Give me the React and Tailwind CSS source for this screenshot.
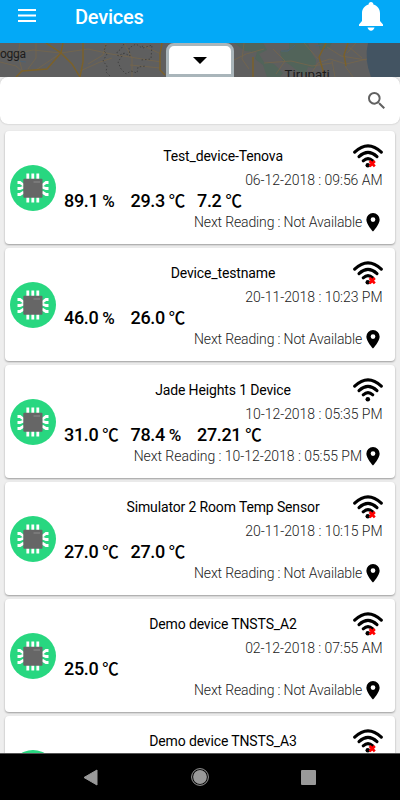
const DEVICES = [
  {
    name: 'Test_device-Tenova', date: '06-12-2018 : 09:56 AM', online: false,
    readings: [['89.1', '%'], ['29.3', '℃'], ['7.2', '℃']], next: null,
  },
  {
    name: 'Device_testname', date: '20-11-2018 : 10:23 PM', online: false,
    readings: [['46.0', '%'], ['26.0', '℃']], next: null,
  },
  {
    name: 'Jade Heights 1 Device', date: '10-12-2018 : 05:35 PM', online: true,
    readings: [['31.0', '℃'], ['78.4', '%'], ['27.21', '℃']], next: '10-12-2018 : 05:55 PM',
  },
  {
    name: 'Simulator 2 Room Temp Sensor', date: '20-11-2018 : 10:15 PM', online: false,
    readings: [['27.0', '℃'], ['27.0', '℃']], next: null,
  },
  {
    name: 'Demo device TNSTS_A2', date: '02-12-2018 : 07:55 AM', online: false,
    readings: [['25.0', '℃']], next: null,
  },
  // Only the top of this card is visible above the navigation bar
  { name: 'Demo device TNSTS_A3', online: false, readings: [] },
];

function ChipIcon() {
  return (
    <svg viewBox="0 0 46 46" className="w-[46px] h-[46px] mt-px flex-shrink-0">
      <circle cx="23" cy="23" r="23" fill="#28d780" />
      <g stroke="#fff" strokeWidth="2.8" fill="none">
        <path d="M17.8 8.500v29M22.8 8.500v29M27.8 8.500v29" />
        <path d="M7.500 17.500h2.500l4 3M7.500 23.500h2.500l4-1.500M7.500 29.500h2.500l4-2.500" />
        <path d="M38.500 17.500h-2.500l-4 3M38.500 23.500h-2.500l-4-1.500M38.500 29.500h-2.500l-4-2.500" />
      </g>
      <rect x="13.300" y="13.700" width="19.200" height="19" rx="1" fill="#666" />
      <path d="M23.500 17h6.500" stroke="#858585" strokeWidth="1.200" />
    </svg>
  );
}

function WifiIcon({ online }) {
  return (
    <svg viewBox="0 0 30 24" className="w-[30px] h-6 -mr-px flex-shrink-0">
      <g fill="none" stroke="#000" strokeWidth="3.100" strokeLinecap="round">
        <path d="M1.700 8.200Q15-4.400 28.300 8.200" />
        <path d="M6 12.600Q15 4.300 24 12.600" />
        <path d="M10.200 16.800Q15 12.500 19.800 16.800" />
      </g>
      <circle cx="14.800" cy="21.200" r="2.300" />
      {!online && <path d="M16.600 17l5.200 5.400M21.800 17l-5.200 5.400" stroke="#f00" strokeWidth="2.700" />}
    </svg>
  );
}

function PinIcon() {
  return (
    <svg viewBox="0 0 14 20" className="w-[14px] h-[19px] flex-shrink-0">
      <path fillRule="evenodd" d="M7 0a7 7 0 0 0-7 7c0 5 7 12.500 7 12.500S14 12 14 7a7 7 0 0 0-7-7zm0 4.400a2.500 2.500 0 1 1 0 5 2.500 2.500 0 0 1 0-5z" />
    </svg>
  );
}

function MapStrip() {
  return (
    <svg viewBox="0 0 400 34" className="absolute inset-0 w-full h-full">
      <rect width="400" height="34" fill="#5f5f5f" />
      {/* Forest and water */}
      <path d="M234 0h29l4 7-8 4 5 8 10 2 9 9-3 4h-13l-4-12-8-6 2-7-12-1z" fill="#52645a" />
      <path d="M289 0h19l3 9 5 8-1 8-7-1-3 8-6-3-9-7-8-5-2-9 9-2z" fill="#52645a" />
      <path d="M318 0h14l-3 5-9 2z" fill="#52645a" />
      <path d="M368 0h32v34h-29Q364 16 368 0z" fill="#435462" />
      <path d="M281 8l7 0 7-6M315 3l7-1M18 18l8 1" stroke="#4c6276" fill="none" />
      {/* Minor roads */}
      <g fill="none" stroke="#76664a" strokeWidth="0.800">
        <path d="M0 19l16 4 7 6M20 0l-2 12 4 15M36 0v15l-8 11M0 8l13 3 20-4 28 3M61 10L36 27M61 10l27-4 23 5 50 8M80 28l20-9 12-4M124 0l8 15v19M106 0l-3 12-15 9M144 3l17 8M130 22l30 3" />
        <path d="M234 17l12-6 18-5M244 0l-2 16 7 10M264 20l27-2 21 5 20-3M309 34l9-14 12-4 16 5 21-5M327 4l14 9 25 4M345 23l8 11M356 0l-9 10M335 34l-3-16M273 6l12 12-9 13M304 0l14 16M349 4l13 11" />
      </g>
      {/* Highways */}
      <g fill="none" stroke="#7c6128" strokeWidth="1.400">
        <path d="M46 0l15 10 11 11 8 13M16 34l6-6 25-2 14-16 2-10M83 0v19l-3 15M162 0l-2 11v16l5 5" />
        <path d="M253 14v20M326 0l-7 14 5 17M348 0l-4 12 2 11" />
      </g>
      <path d="M106 2l-2 6 3 3-4 7 4 5-1 6 5 5M124 1l-3 5-4 3 1 4 6-3 6 3-1-8 7-4 6 4 1-4M124 10l-6 9 3 7 5 5 5-3 6 2 1-6 8-1M143 5l9-3-1 14-10 1" fill="none" stroke="#414141" strokeDasharray="1.500 2" />
      <text x="0" y="15" fontSize="12" letterSpacing="-0.300" fill="#1c1c1c">ogga</text>
      <text x="284.500" y="36" fontSize="13.300" fill="#1c1c1c">Tirupati</text>
    </svg>
  );
}

function DeviceCard({ device }) {
  return (
    <div className="flex items-center flex-shrink-0 h-[112.5px] mb-[4.5px] pl-[5px] pr-[13px] gap-2 bg-white rounded shadow-[0_1px_2px_rgba(0,0,0,0.35)]">
      <ChipIcon />
      <div className="flex-1 min-w-0 self-start pt-[13px]">
        {/* Name + connection */}
        <div className="flex items-center h-6">
          <span className="w-[29px]" />
          <p className="flex-1 text-center text-[14px] tracking-[-0.14px] whitespace-nowrap text-black">{device.name}</p>
          <WifiIcon online={device.online} />
        </div>
        {device.date && (
          <p className="h-6 leading-6 -mr-[0.5px] text-right text-[14px] tracking-[-0.04px] font-light text-[#222]">
            {device.date}
          </p>
        )}
        <div className="flex h-[18px] leading-[18px] text-[18px] font-medium text-black">
          {device.readings.map(([value, unit], i) => (
            <span key={i} className="flex w-[66.5px] gap-[4px] whitespace-nowrap">
              <span className="tracking-[-0.35px]">{value}</span>
              {unit === '℃'
                ? <span className="-mt-px font-['Noto_Sans_CJK_JP',sans-serif] text-[16.5px]">{unit}</span>
                : <span className="text-[17px]">{unit}</span>}
            </span>
          ))}
        </div>
        {device.date && (
          <div className="flex items-center justify-end h-6 gap-1 pr-[2px] text-[14px] font-light text-[#222]">
            {device.next
              ? <span className="tracking-[-0.04px]">Next Reading : {device.next}</span>
              : <span className="tracking-[-0.14px]">Next Reading : Not Available</span>}
            <PinIcon />
          </div>
        )}
      </div>
    </div>
  );
}

export default function App() {
  return (
    <div className="flex flex-col w-[400px] h-[800px] overflow-hidden bg-[#eee] font-[Roboto,'Noto_Sans_CJK_JP',sans-serif]">
      <header className="flex items-center flex-shrink-0 h-[43px] pl-[18px] pr-[17px] pb-[10px] bg-[#03a9f7] text-white">
        <svg viewBox="0 0 18 13" className="w-[18px] h-[13px] -mt-[2px]">
          <path d="M0 1h18M0 6.500h18M0 12h18" stroke="#fff" strokeWidth="1.800" />
        </svg>
        <h1 className="ml-[39px] text-[20px] tracking-[-0.2px] leading-6 font-medium">Devices</h1>
        <svg viewBox="0 0 24 29" className="w-6 h-[29px] ml-auto -mt-px" fill="#fff">
          <path d="M12 0c-1.500 0-2.400 1-2.400 2.600C5.500 3.800 3 7 3 11.500V19l-3 3.500V24h24v-1.500L21 19v-7.500c0-4.500-2.500-7.700-6.600-8.900C14.400 1 13.500 0 12 0z" />
          <path d="M8.500 25.500h7c-.5 2-1.800 3.200-3.500 3.200s-3-1.200-3.500-3.200z" />
        </svg>
      </header>

      {/* Collapsed map with pull-down handle */}
      <div className="relative flex justify-center flex-shrink-0 h-[34px]">
        <MapStrip />
        <button className="relative flex items-center justify-center w-[68px] h-[34px] bg-white border-[3px] border-[#a9b5ba] rounded-t-[8px]">
          <svg viewBox="0 0 14 7" className="w-[14px] h-[7px]">
            <path d="M0 0h14L7 7z" />
          </svg>
        </button>
      </div>

      <div className="flex items-center justify-end flex-shrink-0 h-[46.5px] pr-[15px] bg-white rounded-[8px] shadow-[0_0_2px_rgba(0,0,0,0.25)]">
        <svg viewBox="3 3 17.500 17.500" className="w-[17px] h-[17px]" fill="#616161">
          <path d="M15.500 14h-.79l-.28-.27A6.471 6.471 0 0 0 16 9.500 6.500 6.500 0 1 0 9.500 16c1.610 0 3.090-.59 4.230-1.570l.27.28v.79l5 4.990L20.490 19l-4.990-5zm-6 0C7.010 14 5 11.990 5 9.500S7.010 5 9.500 5 14 7.010 14 9.500 11.990 14 9.500 14z" />
        </svg>
      </div>

      <main className="flex flex-col flex-1 min-h-0 px-[5px] pt-[7.5px] overflow-hidden">
        {DEVICES.map((d) => <DeviceCard key={d.name} device={d} />)}
      </main>

      <nav className="flex items-center justify-center flex-shrink-0 h-[47px] gap-[92px] pr-[2px] bg-black border-t border-[#555]">
        <svg viewBox="0 0 16 17" className="w-4 h-[17px]">
          <path d="M14 1v15L1 8.500z" fill="#999" stroke="#999" strokeLinejoin="round" />
        </svg>
        <svg viewBox="0 0 18 18" className="w-[18px] h-[18px]">
          <circle cx="9" cy="9" r="8.400" fill="none" stroke="#999" />
          <circle cx="9" cy="9" r="6.900" fill="#999" />
        </svg>
        <span className="w-[15px] h-[15px] rounded-[1px] bg-[#999]" />
      </nav>
    </div>
  );
}
